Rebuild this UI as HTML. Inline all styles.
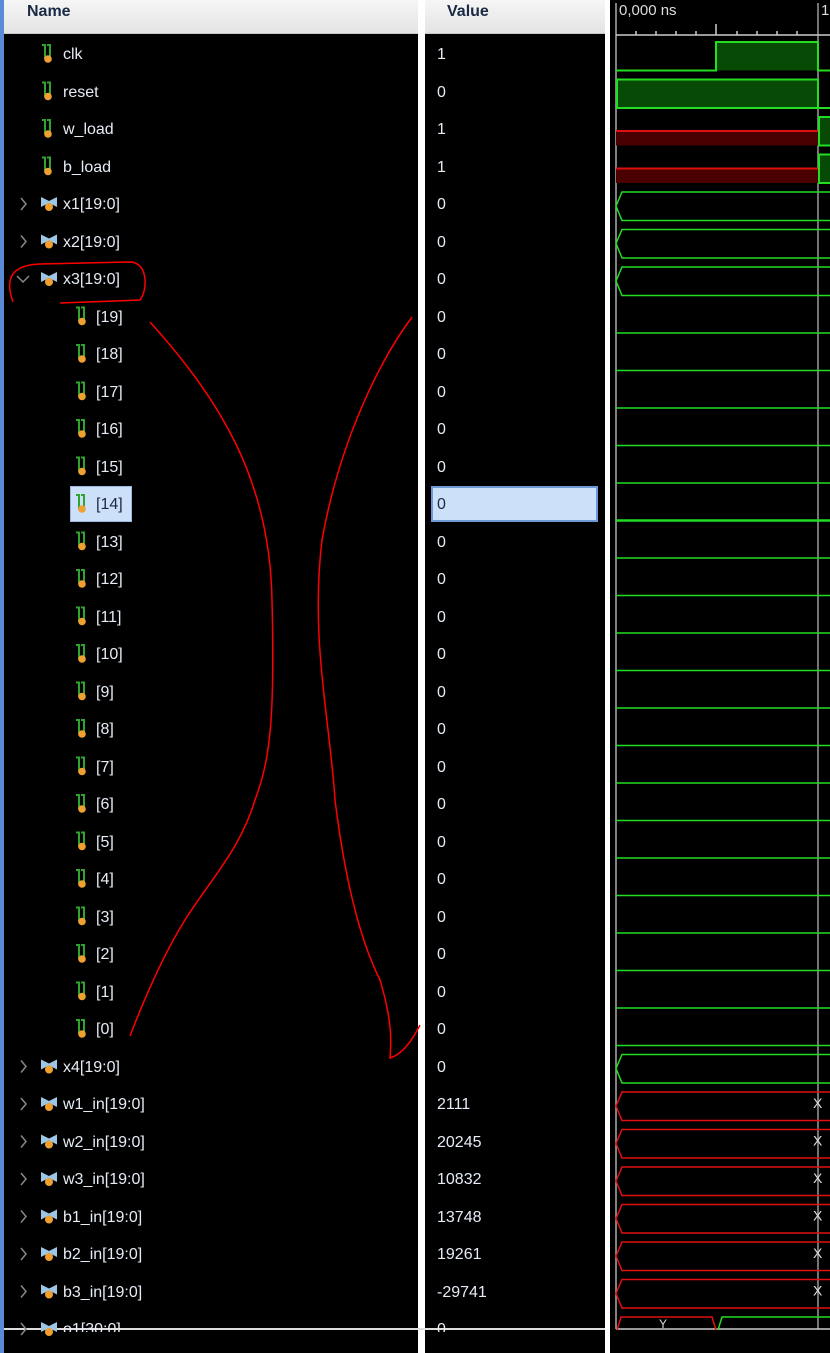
<!DOCTYPE html>
<html><head><meta charset="utf-8"><style>
*{margin:0;padding:0;box-sizing:border-box}
body{width:830px;height:1353px;background:#000;position:relative;overflow:hidden;font-family:"Liberation Sans",sans-serif}
.hdr{position:absolute;top:0;height:34px;background:linear-gradient(#f6f6f6,#e4e4e4);border-bottom:1px solid #c8c8c8;font-weight:bold;font-size:16px;color:#1a2a44;line-height:24px}
.t{position:absolute;color:#e6ecf5;font-size:16px;line-height:20px;white-space:nowrap}
</style></head><body>
<div style="position:absolute;left:0;top:0;width:4px;height:1353px;background:#5b8ad6"></div>
<div class="hdr" style="left:4px;width:414px;padding-left:23px">Name</div>
<div class="hdr" style="left:425px;width:180px;padding-left:22px">Value</div>
<div style="position:absolute;left:418px;top:0;width:7px;height:1353px;background:#fff"></div>
<div style="position:absolute;left:605px;top:0;width:5px;height:1353px;background:#fff"></div>
<div style="position:absolute;left:610px;top:0;width:220px;height:34px;background:#000"></div>
<div style="position:absolute;left:4px;top:1328px;width:601px;height:2px;background:#ddd"></div>

<div style="position:absolute;left:70px;top:486px;width:62px;height:36px;background:#cce0fa;border:1px solid #9cb8e0"></div>
<div style="position:absolute;left:431px;top:486px;width:167px;height:36px;background:#cce0fa;border:2px solid #6d9ad6"></div>

<svg width="830" height="1353" style="position:absolute;left:0;top:0" xmlns="http://www.w3.org/2000/svg">
<defs>
<g id="sc"><path d="M0,-8 h3 v14 M5,-8 h3 v12" stroke="#2fa52f" stroke-width="2" fill="none"/><circle cx="6" cy="6" r="3.8" fill="#f0a030"/></g>
<g id="bu"><path d="M-1,-6 L7,-2 L15,-6 L15,4 L7,0 L-1,4Z" fill="#9cc6e6"/><circle cx="7" cy="4" r="4" fill="#f0a030"/></g>
<path id="chev" d="M0,-6 L5,0 L0,6" stroke="#888" stroke-width="1.5" fill="none"/>
</defs>
<g id="icons"></g>
</svg>
<div id="rows"></div>

<svg width="220" height="1353" viewBox="610 0 220 1353" style="position:absolute;left:610px;top:0" xmlns="http://www.w3.org/2000/svg" id="wv">
<text x="619" y="15" fill="#ddd" font-family="Liberation Sans,sans-serif" font-size="15">0,000 ns</text>
<text x="821" y="15" fill="#ddd" font-family="Liberation Sans,sans-serif" font-size="15">1</text>
<line x1="616" y1="3" x2="616" y2="1329" stroke="#aaa" stroke-width="1.5"/>
<line x1="818" y1="3" x2="818" y2="1329" stroke="#999" stroke-width="1.5"/>
<line x1="616" y1="35" x2="830" y2="35" stroke="#ccc" stroke-width="1.5"/>
<path d="M636,35v-4M656,35v-4M676,35v-4M696,35v-4M716,35v-11M737,35v-4M757,35v-4M777,35v-4M797,35v-4" stroke="#ccc" stroke-width="1.5"/>
<line x1="616" y1="1329" x2="830" y2="1329" stroke="#ccc" stroke-width="1.5"/>
</svg>

<svg width="830" height="1353" style="position:absolute;left:0;top:0" xmlns="http://www.w3.org/2000/svg" fill="none" stroke="#f00" stroke-width="1.5">
<path d="M13,302 C5,280 10,265 40,264 L130,262 C148,262 148,290 140,300 L60,303"/>
<path d="M150,322 C220,400 270,480 272,600 C275,720 270,760 255,800 C240,850 210,880 185,920 C160,960 140,1010 130,1036"/>
<path d="M412,317 C380,360 340,440 322,540 C310,640 330,720 335,800 C345,880 360,940 380,980 C395,1030 390,1050 390,1058 C400,1055 410,1045 420,1025"/>
</svg>

<script>
var rows=[["clk","1",0,0],["reset","0",0,0],["w_load","1",0,0],["b_load","1",0,0],
["x1[19:0]","0",1,0],["x2[19:0]","0",1,0],["x3[19:0]","0",2,0]];
for(var i=19;i>=0;i--)rows.push(["["+i+"]","0",0,1]);
rows=rows.concat([["x4[19:0]","0",1,0],["w1_in[19:0]","2111",1,0],["w2_in[19:0]","20245",1,0],["w3_in[19:0]","10832",1,0],["b1_in[19:0]","13748",1,0],["b2_in[19:0]","19261",1,0],["b3_in[19:0]","-29741",1,0],["o1[30:0]","0",1,0]]);
var h="",ic="",w="";
rows.forEach(function(r,i){
 var c=53+37.5*i;
 var sel=(r[0]=="[14]");
 var col=sel?"#1a2a44":"#e6ecf5";
 var clipTop = i==34;
 var tx=r[3]?96:63, ix=r[3]?74:40;
 h+='<div class="t" style="left:'+tx+'px;top:'+(c-8)+'px;color:'+col+(clipTop?';clip-path:inset(0 0 8px 0)':'')+'">'+r[0]+'</div>';
 h+='<div class="t" style="left:437px;top:'+(c-8)+'px;color:'+col+(clipTop?';clip-path:inset(0 0 8px 0)':'')+'">'+r[1]+'</div>';
 ic+='<use href="#'+(r[2]?'bu':'sc')+'" x="'+(ix+2)+'" y="'+(c)+'"/>';
 if(r[2]==1)ic+='<use href="#chev" x="21" y="'+(c+1)+'"/>';
 if(r[2]==2)ic+='<path d="M17,'+(c-2)+' L23,'+(c+4)+' L29,'+(c-2)+'" stroke="#888" stroke-width="1.5" fill="none"/>';
 var t=c-11,b=c+17.5;
 var G="#22dd22",DG="#064a06",R="#e01010",DR="#4a0000";
 if(r[0]=="clk"){w+='<path d="M716,'+t+'H818V'+b+'H716Z" fill="'+DG+'"/><path d="M616,'+b+'H716V'+t+'H818V'+b+'H830" stroke="'+G+'" stroke-width="2" fill="none"/>';}
 else if(r[0]=="reset"){w+='<path d="M617,'+t+'H818V'+b+'H617Z" fill="'+DG+'" stroke="'+G+'" stroke-width="2"/><path d="M818,'+b+'H830" stroke="'+G+'" stroke-width="2"/>';}
 else if(i==2||i==3){w+='<path d="M616,'+(c+3)+'H818V'+b+'H616Z" fill="'+DR+'"/><path d="M616,'+(c+3)+'H818" stroke="'+R+'" stroke-width="2"/><path d="M819,'+t+'H832V'+b+'H819Z" fill="'+DG+'" stroke="'+G+'" stroke-width="2"/>';}
 else if(r[3]){w+='<path d="M616,'+b+'H830" stroke="'+G+'" stroke-width="'+(sel?2.5:1.5)+'"/>';}
 else if(i==34){w+='<path d="M617,1330L621,'+t+'H712L716,1330" stroke="'+R+'" stroke-width="1.5" fill="none"/><path d="M718,1330L722,'+t+'H832" stroke="'+G+'" stroke-width="1.5" fill="none"/><text x="659" y="1328" fill="#ddd" font-size="12" font-family="Liberation Sans">Y</text>';}
 else {var cl=(i>=28)?R:G;
  w+='<path d="M832,'+t+'H622L616,'+(c+3)+'L622,'+b+'H832" stroke="'+cl+'" stroke-width="1.5" fill="none"/>';
  if(i>=28)w+='<text x="813" y="'+(c+5)+'" fill="#ddd" font-size="14" font-family="Liberation Sans">X</text>';}
});
document.getElementById("rows").innerHTML=h;
document.getElementById("icons").innerHTML=ic;
document.getElementById("wv").insertAdjacentHTML("beforeend",w);
</script>
</body></html>
